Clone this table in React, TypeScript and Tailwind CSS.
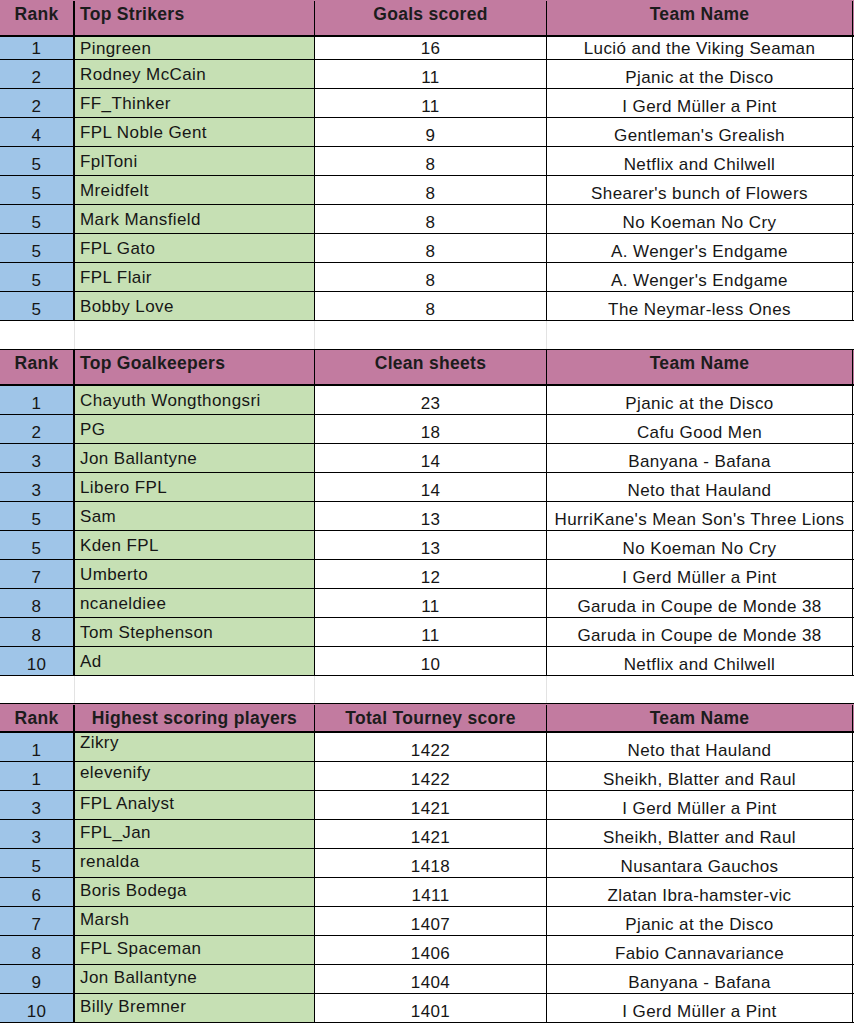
type Row = [string, string, string, string];

type Section = {
  title: string;
  metric: string;
  titleCentered?: boolean;
  headerH: string;
  firstRowH?: string;
  namePad: string;
  rows: Row[];
};

const sections: Section[] = [
  {
    title: 'Top Strikers',
    metric: 'Goals scored',
    headerH: 'h-[37px] pt-[1px]',
    firstRowH: 'h-[23px]',
    namePad: 'pt-[5px]',
    rows: [
      ['1', 'Pingreen', '16', 'Lució and the Viking Seaman'],
      ['2', 'Rodney McCain', '11', 'Pjanic at the Disco'],
      ['2', 'FF_Thinker', '11', 'I Gerd Müller a Pint'],
      ['4', 'FPL Noble Gent', '9', "Gentleman's Grealish"],
      ['5', 'FplToni', '8', 'Netflix and Chilwell'],
      ['5', 'Mreidfelt', '8', "Shearer's bunch of Flowers"],
      ['5', 'Mark Mansfield', '8', 'No Koeman No Cry'],
      ['5', 'FPL Gato', '8', "A. Wenger's Endgame"],
      ['5', 'FPL Flair', '8', "A. Wenger's Endgame"],
      ['5', 'Bobby Love', '8', 'The Neymar-less Ones'],
    ],
  },
  {
    title: 'Top Goalkeepers',
    metric: 'Clean sheets',
    headerH: 'h-[37px] pt-0',
    namePad: 'pt-[5px]',
    rows: [
      ['1', 'Chayuth Wongthongsri', '23', 'Pjanic at the Disco'],
      ['2', 'PG', '18', 'Cafu Good Men'],
      ['3', 'Jon Ballantyne', '14', 'Banyana - Bafana'],
      ['3', 'Libero FPL', '14', 'Neto that Hauland'],
      ['5', 'Sam', '13', "HurriKane's Mean Son's Three Lions"],
      ['5', 'Kden FPL', '13', 'No Koeman No Cry'],
      ['7', 'Umberto', '12', 'I Gerd Müller a Pint'],
      ['8', 'ncaneldiee', '11', 'Garuda in Coupe de Monde 38'],
      ['8', 'Tom Stephenson', '11', 'Garuda in Coupe de Monde 38'],
      ['10', 'Ad', '10', 'Netflix and Chilwell'],
    ],
  },
  {
    title: 'Highest scoring players',
    metric: 'Total Tourney score',
    titleCentered: true,
    headerH: 'h-[30px] pt-[1px]',
    namePad: 'pt-[3px]',
    rows: [
      ['1', 'Zikry', '1422', 'Neto that Hauland'],
      ['1', 'elevenify', '1422', 'Sheikh, Blatter and Raul'],
      ['3', 'FPL Analyst', '1421', 'I Gerd Müller a Pint'],
      ['3', 'FPL_Jan', '1421', 'Sheikh, Blatter and Raul'],
      ['5', 'renalda', '1418', 'Nusantara Gauchos'],
      ['6', 'Boris Bodega', '1411', 'Zlatan Ibra-hamster-vic'],
      ['7', 'Marsh', '1407', 'Pjanic at the Disco'],
      ['8', 'FPL Spaceman', '1406', 'Fabio Cannavariance'],
      ['9', 'Jon Ballantyne', '1404', 'Banyana - Bafana'],
      ['10', 'Billy Bremner', '1401', 'I Gerd Müller a Pint'],
    ],
  },
];

function Header({ s, first }: { s: Section; first: boolean }) {
  return (
    <div
      className={`flex ${s.headerH} bg-[#c27ba0] border-b-2 border-black text-[17.5px] tracking-[0.3px] font-bold text-[#1c1c1c] ${
        first ? '' : 'border-t border-t-black'
      }`}
    >
      <div className="w-[75px] shrink-0 border-r-2 border-black text-center">Rank</div>
      <div
        className={`w-[240px] shrink-0 border-r border-black ${s.titleCentered ? 'text-center' : 'pl-[5px]'}`}
      >
        {s.title}
      </div>
      <div className="w-[232px] shrink-0 border-r border-black text-center">{s.metric}</div>
      <div className="w-[306px] shrink-0 border-r border-black text-center">Team Name</div>
    </div>
  );
}

function DataRow({ r, h, pad }: { r: Row; h: string; pad: string }) {
  return (
    <div className={`flex ${h} border-b border-black text-[17px] tracking-[0.4px] text-[#161616]`}>
      <div className="w-[75px] shrink-0 bg-[#9fc5e8] border-r-2 border-black flex items-end justify-center leading-[20px]">
        {r[0]}
      </div>
      <div className={`w-[240px] shrink-0 bg-[#c6e0b4] border-r border-black pl-[5px] leading-[20px] whitespace-nowrap ${pad}`}>
        {r[1]}
      </div>
      <div className="w-[232px] shrink-0 border-r border-black flex items-end justify-center leading-[20px]">
        {r[2]}
      </div>
      <div className="w-[306px] shrink-0 border-r border-black flex items-end justify-center leading-[20px] whitespace-nowrap">
        {r[3]}
      </div>
    </div>
  );
}

function Gap({ h }: { h: string }) {
  return (
    <div className={`flex ${h}`}>
      <div className="w-[75px] shrink-0 border-r border-[#e3e3e3]" />
      <div className="w-[240px] shrink-0 border-r border-[#e3e3e3]" />
      <div className="w-[232px] shrink-0 border-r border-[#e3e3e3]" />
      <div className="w-[306px] shrink-0" />
    </div>
  );
}

export default function App() {
  return (
    <div className="w-[854px] h-[1024px] bg-white overflow-hidden font-['Liberation_Sans',Arial,sans-serif]">
      {sections.map((s, si) => (
        <div key={s.title}>
          {si > 0 && <Gap h={si === 1 ? 'h-[28px]' : 'h-[27px]'} />}
          <Header s={s} first={si === 0} />
          {s.rows.map((r, i) => {
            const short = i === 0 && !!s.firstRowH;
            // first rows sit a little higher in their cells
            let pad = s.namePad;
            if (short) pad = 'pt-[2px]';
            else if (si === 2 && i === 0) pad = 'pt-0';
            else if (si === 2 && i === 1) pad = 'pt-[1px]';
            return <DataRow key={i} r={r} h={short ? s.firstRowH! : 'h-[29px]'} pad={pad} />;
          })}
        </div>
      ))}
    </div>
  );
}
